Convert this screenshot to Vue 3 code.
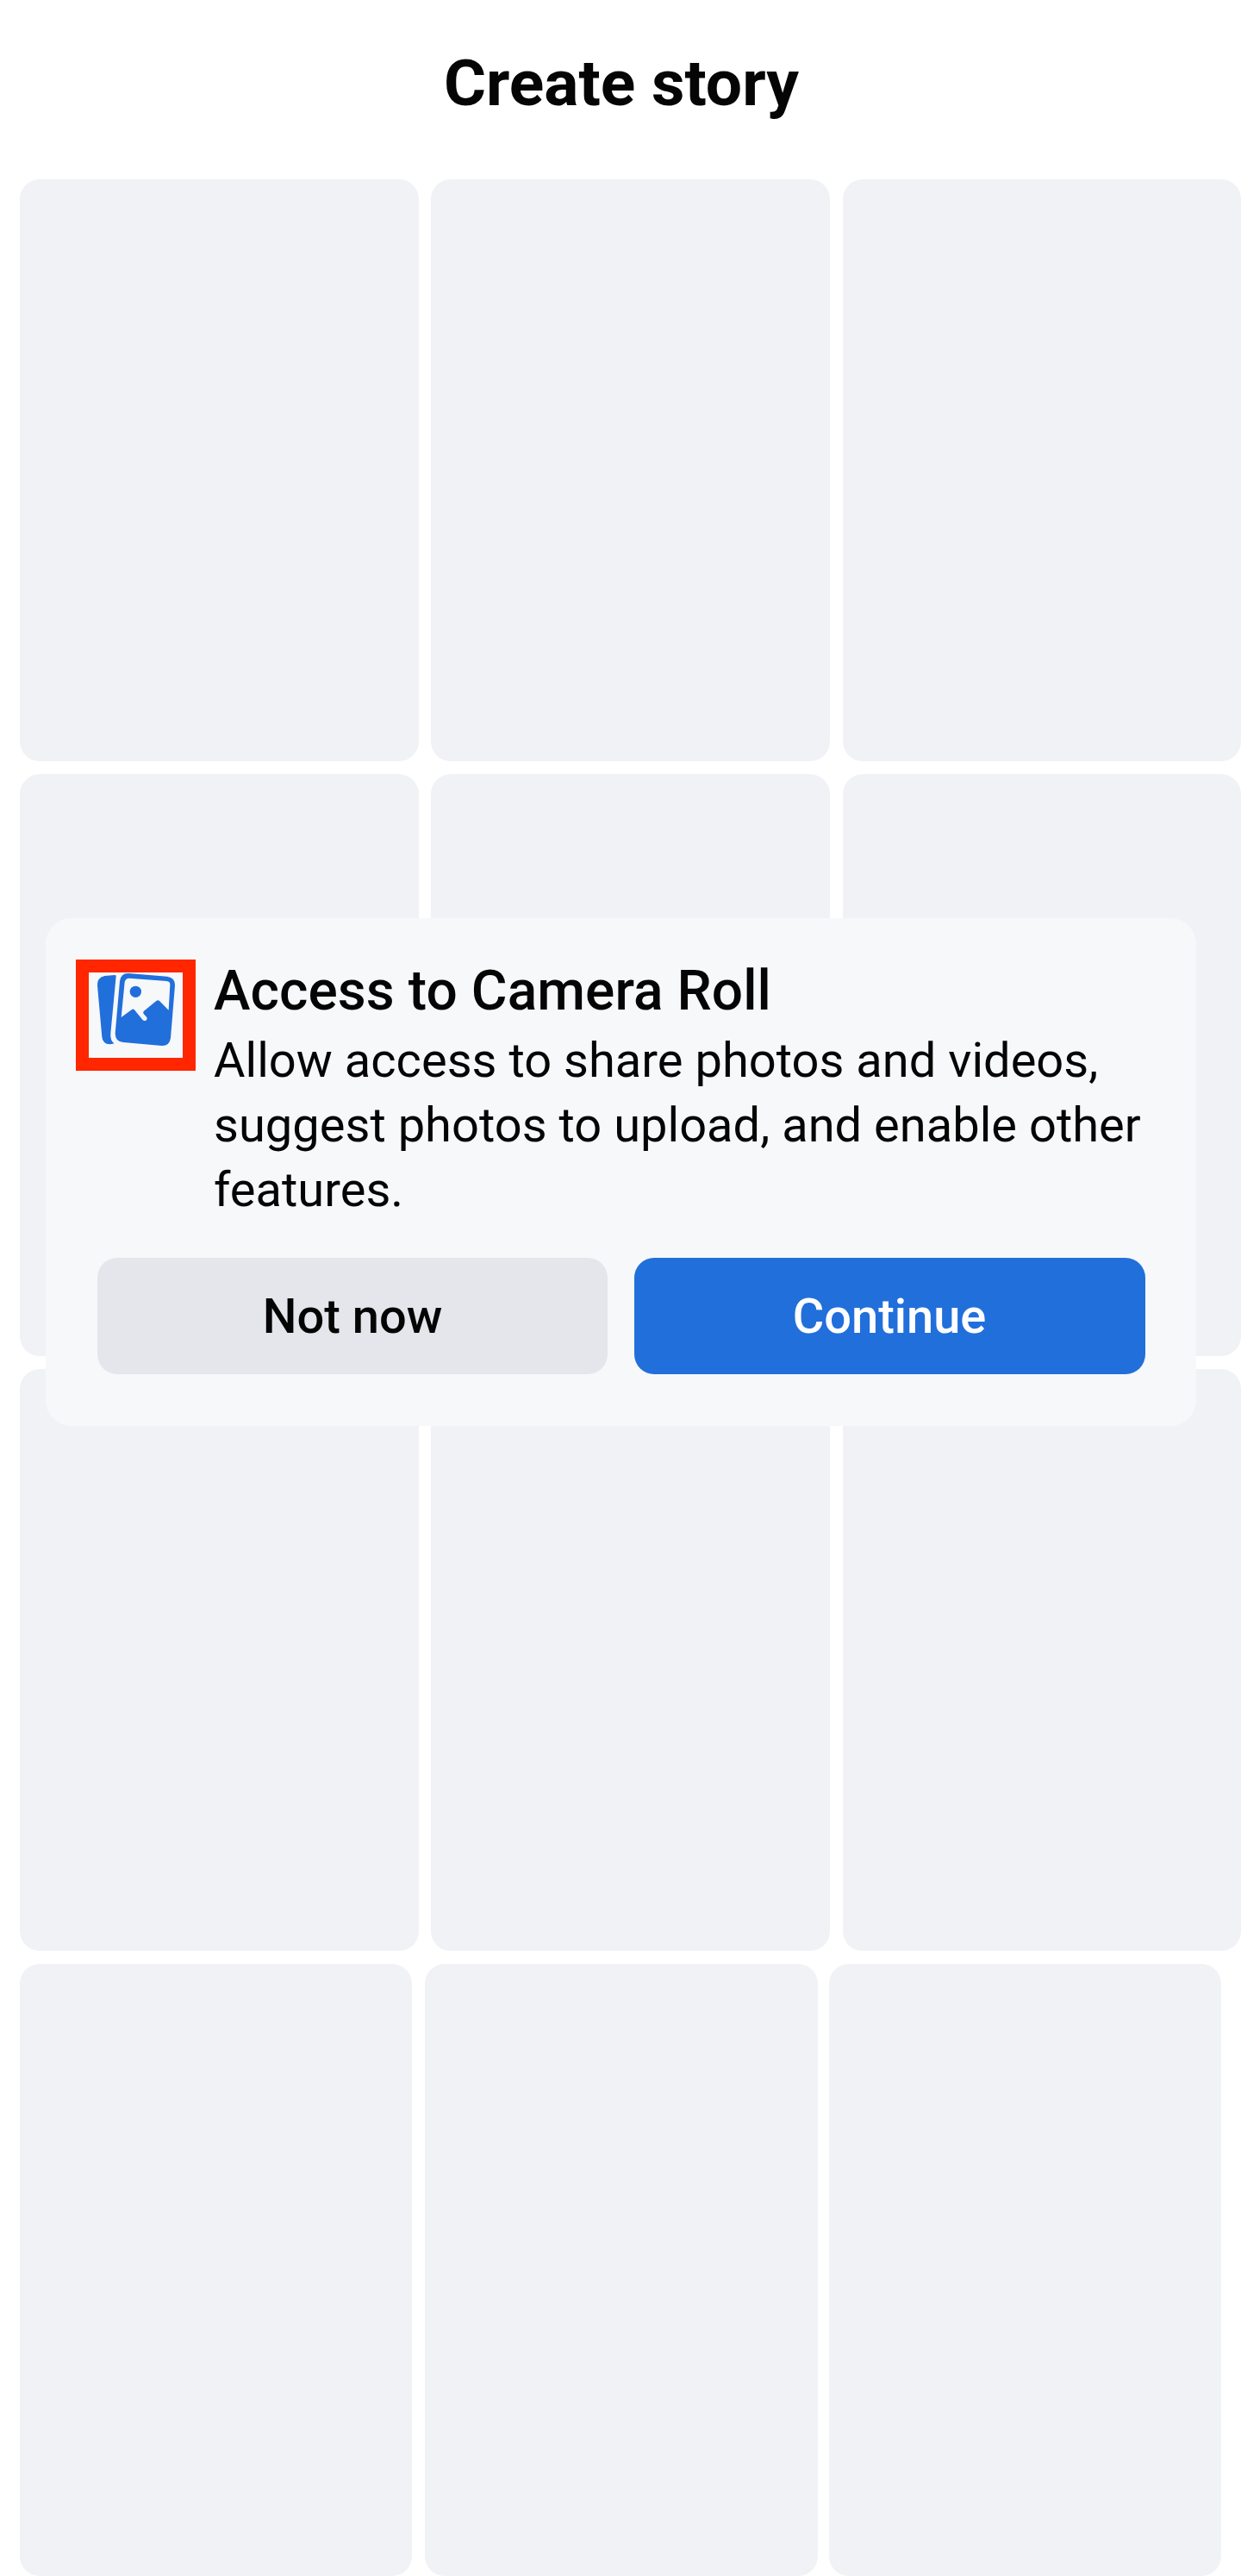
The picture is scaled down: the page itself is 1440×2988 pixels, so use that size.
<script setup>
const rows = ['full', 'full', 'full', 'inset']
</script>

<template>
  <main class="screen">
    <header class="header"><h1>Create story</h1></header>
    <section class="gallery">
      <div v-for="(kind, i) in rows" :key="i" class="row" :class="kind">
        <div v-for="n in 3" :key="n" class="tile"></div>
      </div>
    </section>

    <section class="dialog">
      <div class="info">
        <div class="icon-frame">
          <svg viewBox="0 0 327 297" width="109" height="99" aria-hidden="true">
            <path fill="#216fdb" d="M30 46Q28 18 55 12L91 9Q95 9 95 13L76 212Q74 236 88 247Q86 249 73 250Q48 248 46 224Z" />
            <path
              fill="#216fdb"
              fill-rule="evenodd"
              d="M108 30Q112 2 138 3L273 14Q301 18 300 45L285 228Q281 256 254 255L120 243Q92 240 92 212ZM125 34Q127 20 141 20L271 30Q284 31 283 44L278 131L246 99Q241 94 235 99L192 134Q187 138 191 144L202 156Q205 163 199 167Q192 170 187 164L160 131Q155 125 149 130L113 156Z"
            />
            <circle fill="#216fdb" cx="163" cy="67" r="20" />
          </svg>
        </div>
        <div class="copy">
          <h2>Access to Camera Roll</h2>
          <p>Allow access to share photos and videos,<br />suggest photos to upload, and enable other<br />features.</p>
        </div>
      </div>
      <div class="actions">
        <button class="secondary">Not now</button>
        <button class="primary">Continue</button>
      </div>
    </section>
  </main>
</template>

<style>
body {
  background: #fff;
}
</style>

<style scoped>
.screen {
  position: relative;
  width: 1440px;
  height: 2988px;
  overflow: hidden;
  background: #fff;
  color: #050505;
  font-family: Roboto, sans-serif;
}
.header {
  display: flex;
  justify-content: center;
  height: 208px;
}
h1,
h2,
p {
  margin: 0;
  white-space: nowrap;
}
h1 {
  padding: 52px 0 0 2px;
  font-size: 75px;
  line-height: 88px;
  font-weight: 700;
}
.gallery {
  display: flex;
  flex-direction: column;
  gap: 15px;
  padding-left: 23px;
}
.row {
  display: grid;
  height: 675px;
  grid-template-columns: 463px 463px 462px;
  column-gap: 14px;
}
.tile {
  border-radius: 23px;
  background: #f0f2f5;
}
.full .tile:last-child {
  margin-left: 1px;
  margin-right: -1px;
}
.inset {
  height: 709.5px;
  grid-template-columns: 455px 456px 455px;
  column-gap: 15px;
}
.inset .tile:last-child {
  margin-left: -2px;
  margin-right: 2px;
}
.dialog {
  position: absolute;
  left: 53px;
  top: 1065px;
  width: 1335px;
  height: 589px;
  box-sizing: border-box;
  padding: 48px 59px 60px 35px;
  border-radius: 30px;
  background: #f7f8fa;
  display: flex;
  flex-direction: column;
  justify-content: space-between;
}
.info {
  display: flex;
  align-items: flex-start;
  gap: 21px;
}
.icon-frame {
  flex: none;
  width: 109px;
  height: 99px;
  border: 15px solid #ff2600;
}
.icon-frame svg {
  display: block;
}
h2 {
  font-size: 64px;
  line-height: 73px;
  font-weight: 500;
  letter-spacing: 0.07px;
}
p {
  padding-top: 7px;
  font-size: 56px;
  line-height: 75px;
  letter-spacing: 0.02px;
}
.actions {
  display: grid;
  grid-template-columns: 592px 593px;
  gap: 31px;
  margin-left: 25px;
}
button {
  height: 135px;
  padding: 0;
  border: 0;
  border-radius: 23px;
  font: 500 56px/135px Roboto, sans-serif;
  padding-top: 1px;
}
.secondary {
  background: #e4e6eb;
  color: #050505;
}
.primary {
  padding-right: 1px;
  background: #216fdb;
  color: #fff;
}
</style>
